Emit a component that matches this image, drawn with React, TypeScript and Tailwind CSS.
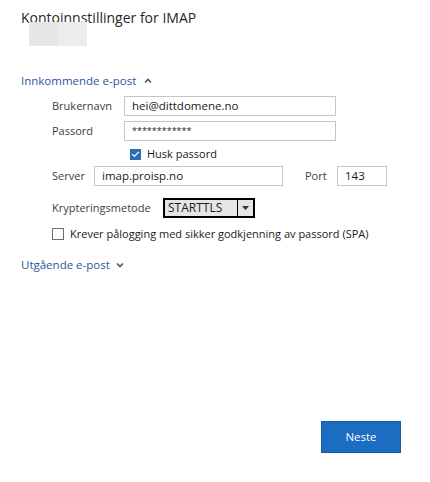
import { Check } from 'lucide-react'

const font = { fontFamily: '"Open Sans", "Noto Sans", sans-serif' }

function Chevron({ up }: { up?: boolean }) {
  return (
    <svg width="8" height="6" viewBox="0 0 8 6" className={up ? '' : 'rotate-180'}>
      <path d="M1 4.5 L4 1.5 L7 4.5" fill="none" stroke="#555" strokeWidth="1.6" />
    </svg>
  )
}

function Field({ value, className }: { value: string; className: string }) {
  return (
    <div
      className={`h-[20px] border border-[#c6c6c6] bg-white px-[7px] flex items-center text-[11.5px] text-[#1a1a1a] ${className}`}
    >
      {value}
    </div>
  )
}

export default function App() {
  return (
    <div className="relative w-[430px] h-[482px] bg-white text-[11px] text-[#404040]" style={font}>
      {/* redaction block */}
      <div className="absolute left-[29px] top-[22px] flex">
        <div className="w-[29px] h-[24px] bg-[#e6e6e6]" />
        <div className="w-[29px] h-[24px] bg-[#ececec]" />
      </div>

      <div className="pl-[21px] pt-[7px]">
        <h1 className="text-[14px] leading-[22px] text-[#262626]">Kontoinnstillinger for IMAP</h1>

        <div className="mt-[43px] flex items-center gap-[8px] text-[#2b579a] leading-[18px]">
          <span className="text-[11.5px]">Innkommende e-post</span>
          <Chevron up />
        </div>

        <div className="pl-[31px] mt-[6px] flex flex-col">
          <div className="flex items-center h-[20px]">
            <span className="w-[72px]">Brukernavn</span>
            <Field value="hei@dittdomene.no" className="w-[212px]" />
          </div>
          <div className="flex items-center h-[20px] mt-[5px]">
            <span className="w-[72px]">Passord</span>
            <Field value="************" className="w-[212px] !text-[9px]" />
          </div>
          <div className="flex items-center h-[18px] mt-[4px] pl-[78px] gap-[6px] text-[#1a1a1a]">
            <span className="w-[11px] h-[11px] bg-[#2b6cb7] flex items-center justify-center">
              <Check size={9} color="white" strokeWidth={3} />
            </span>
            <span>Husk passord</span>
          </div>
          <div className="flex items-center h-[20px] mt-[3px]">
            <span className="w-[42px]">Server</span>
            <Field value="imap.proisp.no" className="w-[189px]" />
            <span className="ml-[22px] w-[32px]">Port</span>
            <Field value="143" className="w-[50px]" />
          </div>
          <div className="flex items-center h-[20px] mt-[12px]">
            <span className="w-[111px]">Krypteringsmetode</span>
            <div className="w-[92px] h-[20px] border-2 border-black bg-[#e5e5e5] flex text-[#1a1a1a]">
              <span className="flex-1 flex items-center pl-[3px] leading-none text-[12px]">STARTTLS</span>
              <span className="w-[16px] border-l border-black flex items-center justify-center">
                <svg width="7" height="4" viewBox="0 0 7 4">
                  <path d="M0 0 H7 L3.5 4 Z" fill="#333" />
                </svg>
              </span>
            </div>
          </div>
          <div className="flex items-center h-[18px] mt-[7px] gap-[6px] text-[#1a1a1a]">
            <span className="w-[12px] h-[12px] border border-[#6e6e6e] bg-white" />
            <span>Krever pålogging med sikker godkjenning av passord (SPA)</span>
          </div>
        </div>

        <div className="mt-[13px] flex items-center gap-[6px] text-[#2b579a] leading-[18px]">
          <span className="text-[11.5px]">Utgående e-post</span>
          <Chevron />
        </div>
      </div>

      <button className="absolute left-[321px] top-[421px] w-[80px] h-[32px] bg-[#1a6dc0] border border-[#155a9e] text-white text-[11.5px]">
        Neste
      </button>
    </div>
  )
}
